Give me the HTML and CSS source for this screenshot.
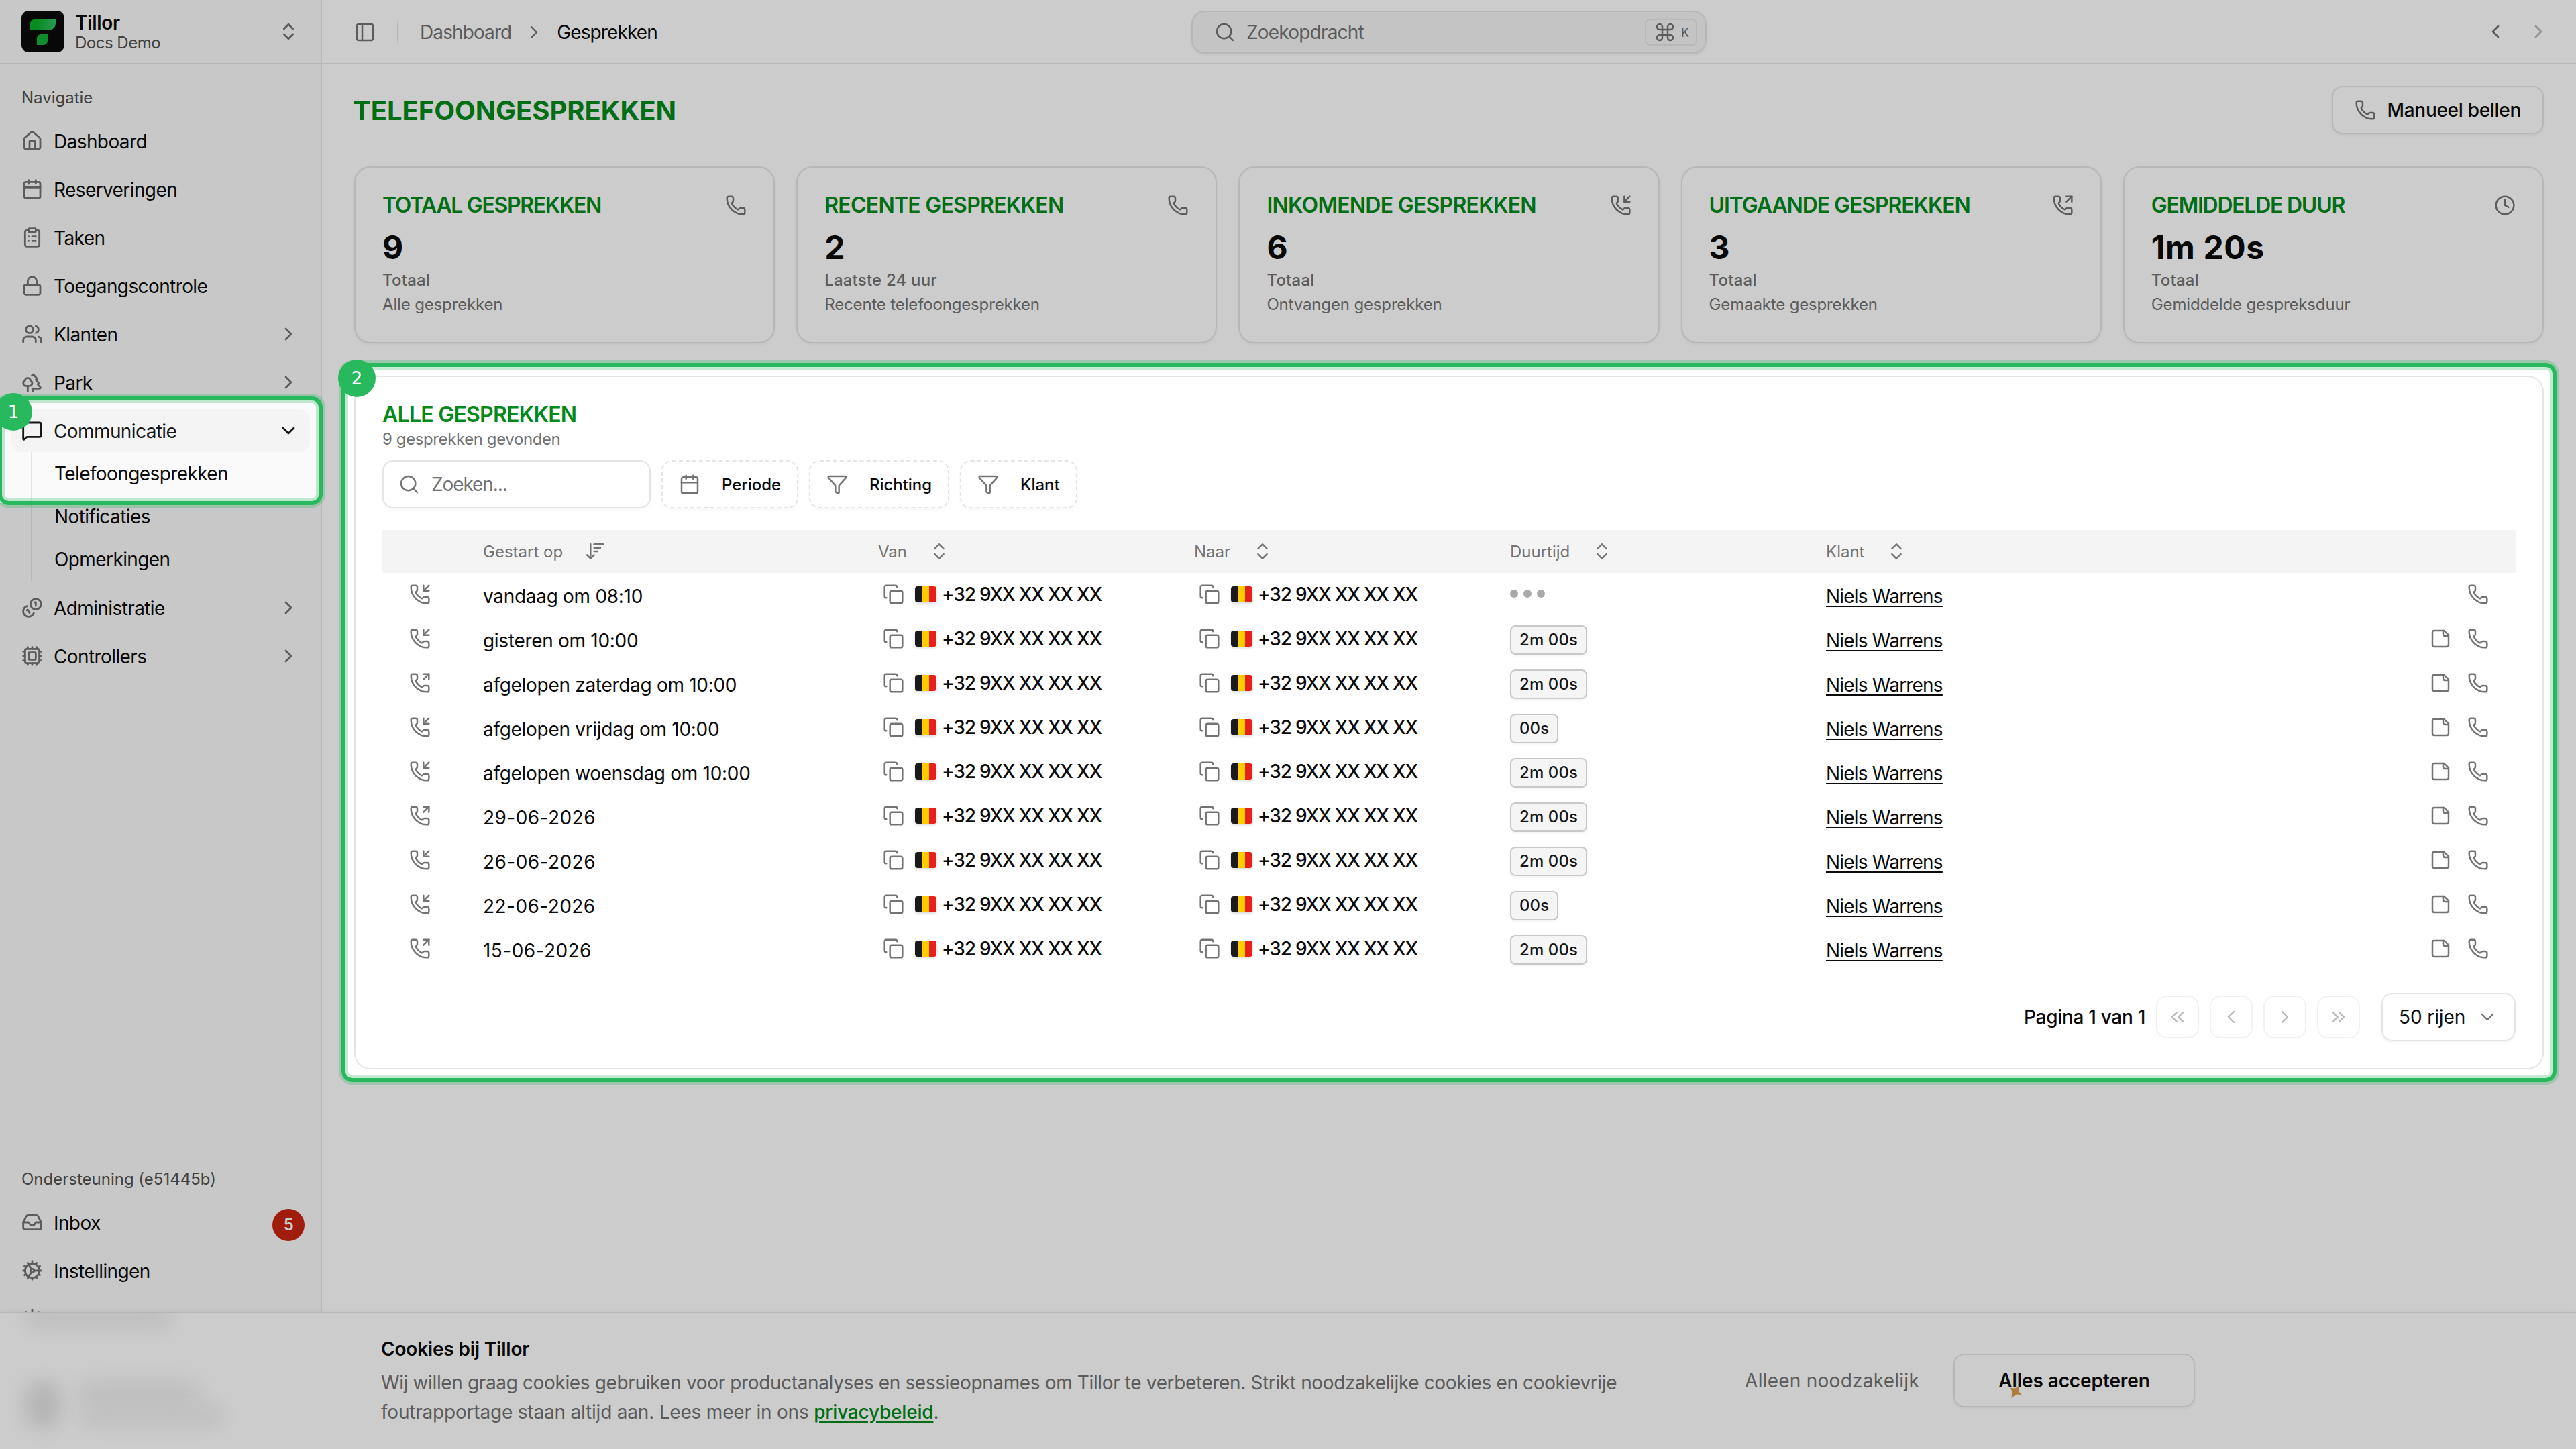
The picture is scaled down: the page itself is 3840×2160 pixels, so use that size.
FILE: index.html
```html
<!DOCTYPE html>
<html lang="nl">
<head>
  <meta charset="UTF-8" />
  <meta name="viewport" content="width=device-width, initial-scale=1.0" />
  <title>Gesprekken - Tillor</title>
  <link rel="stylesheet" href="styles.css">
</head>
<body>
  <!-- icon sprite -->
  <svg class="sprite" width="0" height="0">
    <symbol id="i-updown" viewBox="0 0 24 24"><path d="m7 15 5 5 5-5"/><path d="m7 9 5-5 5 5"/></symbol>
    <symbol id="i-right" viewBox="0 0 24 24"><path d="m9 18 6-6-6-6"/></symbol>
    <symbol id="i-left" viewBox="0 0 24 24"><path d="m15 18-6-6 6-6"/></symbol>
    <symbol id="i-down" viewBox="0 0 24 24"><path d="m6 9 6 6 6-6"/></symbol>
    <symbol id="i-first" viewBox="0 0 24 24"><path d="m11 17-5-5 5-5"/><path d="m18 17-5-5 5-5"/></symbol>
    <symbol id="i-last" viewBox="0 0 24 24"><path d="m6 17 5-5-5-5"/><path d="m13 17 5-5-5-5"/></symbol>
    <symbol id="i-home" viewBox="0 0 24 24"><path d="M15 21v-8a1 1 0 0 0-1-1h-4a1 1 0 0 0-1 1v8"/><path d="M3 10a2 2 0 0 1 .709-1.528l7-6a2 2 0 0 1 2.582 0l7 6A2 2 0 0 1 21 10v9a2 2 0 0 1-2 2H5a2 2 0 0 1-2-2z"/></symbol>
    <symbol id="i-calendar" viewBox="0 0 24 24"><path d="M8 2v4"/><path d="M16 2v4"/><rect width="18" height="18" x="3" y="4" rx="2"/><path d="M3 10h18"/></symbol>
    <symbol id="i-tasks" viewBox="0 0 24 24"><rect width="8" height="4" x="8" y="2" rx="1"/><path d="M16 4h2a2 2 0 0 1 2 2v14a2 2 0 0 1-2 2H6a2 2 0 0 1-2-2V6a2 2 0 0 1 2-2h2"/><path d="M12 11h4"/><path d="M12 16h4"/><path d="M8 11h.01"/><path d="M8 16h.01"/></symbol>
    <symbol id="i-lock" viewBox="0 0 24 24"><rect width="18" height="11" x="3" y="11" rx="2"/><path d="M7 11V7a5 5 0 0 1 10 0v4"/></symbol>
    <symbol id="i-users" viewBox="0 0 24 24"><path d="M16 21v-2a4 4 0 0 0-4-4H6a4 4 0 0 0-4 4v2"/><path d="M16 3.128a4 4 0 0 1 0 7.744"/><path d="M22 21v-2a4 4 0 0 0-3-3.87"/><circle cx="9" cy="7" r="4"/></symbol>
    <symbol id="i-trees" viewBox="0 0 24 24"><path d="M10 10v.2A3 3 0 0 1 8.9 16H5a3 3 0 0 1-1-5.8V10a3 3 0 0 1 6 0Z"/><path d="M7 16v6"/><path d="M13 19v3"/><path d="M12 19h8.3a1 1 0 0 0 .7-1.7L18 14h.3a1 1 0 0 0 .7-1.7L16 9h.2a1 1 0 0 0 .8-1.7L13 3l-1.4 1.5"/></symbol>
    <symbol id="i-message" viewBox="0 0 24 24"><path d="M22 17a2 2 0 0 1-2 2H6.828a2 2 0 0 0-1.414.586l-2.202 2.202A.71.71 0 0 1 2 21.286V5a2 2 0 0 1 2-2h16a2 2 0 0 1 2 2z"/></symbol>
    <symbol id="i-coins" viewBox="0 0 24 24"><path d="M13.744 17.736a6 6 0 1 1-7.48-7.48"/><path d="M15 6h1v4"/><path d="m6.134 14.768.866-.5 2 3.464"/><circle cx="16" cy="8" r="6"/></symbol>
    <symbol id="i-cpu" viewBox="0 0 24 24"><path d="M12 20v2M12 2v2M17 20v2M17 2v2M2 12h2M2 17h2M2 7h2M20 12h2M20 17h2M20 7h2M7 20v2M7 2v2"/><rect x="4" y="4" width="16" height="16" rx="2"/><rect x="8" y="8" width="8" height="8" rx="1"/></symbol>
    <symbol id="i-inbox" viewBox="0 0 24 24"><path d="M22 12h-6l-2 3h-4l-2-3H2"/><path d="M5.45 5.11 2 12v6a2 2 0 0 0 2 2h16a2 2 0 0 0 2-2v-6l-3.45-6.89A2 2 0 0 0 16.76 4H7.24a2 2 0 0 0-1.79 1.11z"/></symbol>
    <symbol id="i-cog" viewBox="0 0 24 24"><path d="M11 10.27 7 3.34M11 13.73l-4 6.93M12 22v-2M12 2v2M14 12h8M17 20.66l-1-1.73M17 3.34l-1 1.73M2 12h2M20.66 17l-1.73-1M20.66 7l-1.73 1M3.34 17l1.73-1M3.34 7l1.73 1"/><circle cx="12" cy="12" r="2"/><circle cx="12" cy="12" r="8"/></symbol>
    <symbol id="i-sun" viewBox="0 0 24 24"><circle cx="12" cy="12" r="4"/><path d="M12 2v2M12 20v2M4.93 4.93l1.41 1.41M17.66 17.66l1.41 1.41M2 12h2M20 12h2M6.34 17.66l-1.41 1.41M19.07 4.93l-1.41 1.41"/></symbol>
    <symbol id="i-panel" viewBox="0 0 24 24"><rect width="18" height="18" x="3" y="3" rx="2"/><path d="M9 3v18"/></symbol>
    <symbol id="i-search" viewBox="0 0 24 24"><path d="m21 21-4.34-4.34"/><circle cx="11" cy="11" r="8"/></symbol>
    <symbol id="i-cmd" viewBox="0 0 24 24"><path d="M15 6v12a3 3 0 1 0 3-3H6a3 3 0 1 0 3 3V6a3 3 0 1 0-3 3h12a3 3 0 1 0-3-3"/></symbol>
    <symbol id="i-phone" viewBox="0 0 24 24"><path d="M13.832 16.568a1 1 0 0 0 1.213-.303l.355-.465A2 2 0 0 1 17 15h3a2 2 0 0 1 2 2v3a2 2 0 0 1-2 2A18 18 0 0 1 2 4a2 2 0 0 1 2-2h3a2 2 0 0 1 2 2v3a2 2 0 0 1-.8 1.6l-.468.351a1 1 0 0 0-.292 1.233 14 14 0 0 0 6.392 6.384"/></symbol>
    <symbol id="i-in" viewBox="0 0 24 24"><path d="M16 2v6h6"/><path d="m22 2-6 6"/><use href="#i-phone"/></symbol>
    <symbol id="i-out" viewBox="0 0 24 24"><path d="m16 8 6-6"/><path d="M22 8V2h-6"/><use href="#i-phone"/></symbol>
    <symbol id="i-clock" viewBox="0 0 24 24"><circle cx="12" cy="12" r="10"/><path d="M12 6v6l4 2"/></symbol>
    <symbol id="i-funnel" viewBox="0 0 24 24"><path d="M10 20a1 1 0 0 0 .553.895l2 1A1 1 0 0 0 14 21v-7a2 2 0 0 1 .517-1.341L21.74 4.67A1 1 0 0 0 21 3H3a1 1 0 0 0-.742 1.67l7.225 7.989A2 2 0 0 1 10 14z"/></symbol>
    <symbol id="i-sort" viewBox="0 0 24 24"><path d="m3 16 4 4 4-4"/><path d="M7 20V4"/><path d="M11 4h10"/><path d="M11 8h7"/><path d="M11 12h4"/></symbol>
    <symbol id="i-copy" viewBox="0 0 24 24"><rect width="14" height="14" x="8" y="8" rx="2"/><path d="M4 16c-1.1 0-2-.9-2-2V4c0-1.1.9-2 2-2h10c1.1 0 2 .9 2 2"/></symbol>
    <symbol id="i-note" viewBox="0 0 24 24"><path d="M16 3H5a2 2 0 0 0-2 2v14a2 2 0 0 0 2 2h14a2 2 0 0 0 2-2V8Z"/><path d="M15 3v4a2 2 0 0 0 2 2h4"/></symbol>
  </svg>

  <div class="app">
    <aside class="sidebar">
      <div class="sidebar-head">
        <svg class="logo" viewBox="0 0 64 62">
          <defs>
            <linearGradient id="lg" x1="0" y1="0" x2="1" y2="0"><stop offset=".25" stop-color="#0cad26"/><stop offset="1" stop-color="#30c267"/></linearGradient>
          </defs>
          <rect width="64" height="62" rx="11" fill="#0a0a0a"/>
          <path d="M19 13h32v6a10 10 0 0 1-10 10H13V19a6 6 0 0 1 6-6z" fill="url(#lg)"/>
          <path d="M29 35h10v10a6 6 0 0 1-6 6H23V41a6 6 0 0 1 6-6z" fill="#15b136"/>
        </svg>
        <div class="team">
          <strong>Tillor</strong>
          <span>Docs Demo</span>
        </div>
        <svg class="icon"><use href="#i-updown"/></svg>
      </div>
      <nav class="nav">
        <div class="nav-label">Navigatie</div>
        <a class="nav-item"><svg class="icon"><use href="#i-home"/></svg><span>Dashboard</span></a>
        <a class="nav-item"><svg class="icon"><use href="#i-calendar"/></svg><span>Reserveringen</span></a>
        <a class="nav-item"><svg class="icon"><use href="#i-tasks"/></svg><span>Taken</span></a>
        <a class="nav-item"><svg class="icon"><use href="#i-lock"/></svg><span>Toegangscontrole</span></a>
        <a class="nav-item"><svg class="icon"><use href="#i-users"/></svg><span>Klanten</span><svg class="icon"><use href="#i-right"/></svg></a>
        <a class="nav-item"><svg class="icon"><use href="#i-trees"/></svg><span>Park</span><svg class="icon"><use href="#i-right"/></svg></a>
        <a class="nav-item active"><svg class="icon"><use href="#i-message"/></svg><span>Communicatie</span><svg class="icon"><use href="#i-down"/></svg></a>
        <div class="nav-sub">
          <a>Telefoongesprekken</a>
          <a>Notificaties</a>
          <a>Opmerkingen</a>
        </div>
        <a class="nav-item"><svg class="icon"><use href="#i-coins"/></svg><span>Administratie</span><svg class="icon"><use href="#i-right"/></svg></a>
        <a class="nav-item"><svg class="icon"><use href="#i-cpu"/></svg><span>Controllers</span><svg class="icon"><use href="#i-right"/></svg></a>
      </nav>
      <nav class="nav nav-support">
        <div class="nav-label">Ondersteuning (e51445b)</div>
        <a class="nav-item"><svg class="icon"><use href="#i-inbox"/></svg><span>Inbox</span><b class="count">5</b></a>
        <a class="nav-item"><svg class="icon"><use href="#i-cog"/></svg><span>Instellingen</span></a>
        <a class="nav-item"><svg class="icon"><use href="#i-sun"/></svg></a>
      </nav>
    </aside>

    <main class="main">
      <header class="topbar">
        <div class="crumbs">
          <svg class="icon"><use href="#i-panel"/></svg>
          <i class="sep"></i>
          <span class="muted">Dashboard</span>
          <svg class="icon"><use href="#i-right"/></svg>
          <span>Gesprekken</span>
        </div>
        <div class="search">
          <svg class="icon"><use href="#i-search"/></svg>
          <span>Zoekopdracht</span>
          <kbd><svg class="icon"><use href="#i-cmd"/></svg>K</kbd>
        </div>
        <div class="history">
          <svg class="icon"><use href="#i-left"/></svg>
          <svg class="icon off"><use href="#i-right"/></svg>
        </div>
      </header>

      <div class="content">
        <div class="page-head">
          <h1>TELEFOONGESPREKKEN</h1>
          <button class="btn"><svg class="icon"><use href="#i-phone"/></svg>Manueel bellen</button>
        </div>

        <section class="stats">
          <div class="stat">
            <h2>TOTAAL GESPREKKEN</h2><svg class="icon"><use href="#i-phone"/></svg>
            <div class="value">9</div>
            <p class="period">Totaal</p>
            <p>Alle gesprekken</p>
          </div>
          <div class="stat">
            <h2>RECENTE GESPREKKEN</h2><svg class="icon"><use href="#i-phone"/></svg>
            <div class="value">2</div>
            <p class="period">Laatste 24 uur</p>
            <p>Recente telefoongesprekken</p>
          </div>
          <div class="stat">
            <h2>INKOMENDE GESPREKKEN</h2><svg class="icon"><use href="#i-in"/></svg>
            <div class="value">6</div>
            <p class="period">Totaal</p>
            <p>Ontvangen gesprekken</p>
          </div>
          <div class="stat">
            <h2>UITGAANDE GESPREKKEN</h2><svg class="icon"><use href="#i-out"/></svg>
            <div class="value">3</div>
            <p class="period">Totaal</p>
            <p>Gemaakte gesprekken</p>
          </div>
          <div class="stat">
            <h2>GEMIDDELDE DUUR</h2><svg class="icon"><use href="#i-clock"/></svg>
            <div class="value">1m 20s</div>
            <p class="period">Totaal</p>
            <p>Gemiddelde gespreksduur</p>
          </div>
        </section>

        <section class="panel">
          <h2>ALLE GESPREKKEN</h2>
          <p class="found">9 gesprekken gevonden</p>
          <div class="filters">
            <div class="input"><svg class="icon"><use href="#i-search"/></svg>Zoeken...</div>
            <button class="filter"><svg class="icon"><use href="#i-calendar"/></svg>Periode</button>
            <button class="filter"><svg class="icon"><use href="#i-funnel"/></svg>Richting</button>
            <button class="filter"><svg class="icon"><use href="#i-funnel"/></svg>Klant</button>
          </div>
          <div class="table">
            <div class="row head">
              <div></div>
              <div>Gestart op<svg class="icon"><use href="#i-sort"/></svg></div>
              <div>Van<svg class="icon"><use href="#i-updown"/></svg></div>
              <div>Naar<svg class="icon"><use href="#i-updown"/></svg></div>
              <div>Duurtijd<svg class="icon"><use href="#i-updown"/></svg></div>
              <div>Klant<svg class="icon"><use href="#i-updown"/></svg></div>
            </div>
            <div id="calls"></div>
          </div>
          <div class="pager">
            <span>Pagina 1 van 1</span>
            <button><svg class="icon"><use href="#i-first"/></svg></button>
            <button><svg class="icon"><use href="#i-left"/></svg></button>
            <button><svg class="icon"><use href="#i-right"/></svg></button>
            <button><svg class="icon"><use href="#i-last"/></svg></button>
            <div class="select">50 rijen<svg class="icon"><use href="#i-down"/></svg></div>
          </div>
        </section>
      </div>
    </main>
  </div>

  <div class="cookies">
    <i class="ghost ghost-theme"></i>
    <i class="ghost ghost-avatar"></i>
    <i class="ghost ghost-user"></i>
    <i class="ghost ghost-mail"></i>
    <div class="cookies-inner">
      <div class="cookies-text">
        <h3>Cookies bij Tillor</h3>
        <p>Wij willen graag cookies gebruiken voor productanalyses en sessieopnames om Tillor te verbeteren. Strikt noodzakelijke cookies en cookievrije<br><span class="line-2">foutrapportage staan altijd aan. Lees meer in ons <a>privacybeleid</a>.</span></p>
      </div>
      <button class="link-btn">Alleen noodzakelijk</button>
      <button class="accept">Alles accepteren</button>
    </div>
  </div>

  <!-- tour overlay -->
  <div class="dim"></div>
  <svg class="spark" viewBox="0 0 20 20"><path d="M1 3 8 3.500 13 0 13 8 18 13 10 12.500 2 18 4 10z" fill="#b07a3a"/></svg>
  <div class="ring ring-1"></div>
  <div class="ring ring-2"></div>
  <div class="step step-1">1</div>
  <div class="step step-2">2</div>

  <script src="script.js"></script>
</body>
</html>
```
FILE: styles.css
```css
* { box-sizing: border-box; }
body { margin: 0; width: 3840px; height: 2160px; overflow: hidden; position: relative; font-family: Inter, sans-serif; font-size: 28px; letter-spacing: -0.6px; color: #0a0a0a; background: #fff; white-space: nowrap; }
h1, h2, h3, p { margin: 0; }
button { font: inherit; letter-spacing: inherit; color: inherit; background: none; border: 0; padding: 0; }
.sprite { position: absolute; }
.icon { width: 32px; height: 32px; flex: none; fill: none; stroke: #737373; stroke-width: 1.85; stroke-linecap: round; stroke-linejoin: round; }
.muted { color: #737373; }

.app { display: flex; height: 2160px; }

/* sidebar */
.sidebar { width: 480px; flex: none; display: flex; flex-direction: column; background: #fafafa; border-right: 2px solid #e5e5e5; }
.sidebar .icon { stroke-width: 2.1; }
.sidebar-head { height: 96px; display: flex; align-items: center; gap: 16px; padding: 0 32px; border-bottom: 2px solid #e5e5e5; }
.sidebar-head > .icon { margin-left: auto; }
.logo { width: 64px; height: 62px; }
.team { display: flex; flex-direction: column; }
.team strong { font-weight: 600; line-height: 30px; letter-spacing: -0.3px; padding-top: 3px; }
.team span { font-size: 24px; line-height: 30px; letter-spacing: -0.5px; color: #525252; }
.nav { display: flex; flex-direction: column; gap: 8px; padding: 18px 16px 0; }
.nav-label { height: 64px; line-height: 64px; margin-bottom: -8px; padding-left: 16px; font-size: 24px; letter-spacing: 0; color: #525252; }
.nav-item { display: flex; align-items: center; gap: 16px; height: 64px; padding: 0 16px; border-radius: 16px; }
.nav-item span { flex: 1; padding-top: 1px; }
.nav-item.active { background: #f4f4f5; color: #171717; }
.nav-item.active .icon { stroke: #171717; }
.nav-sub { display: flex; flex-direction: column; gap: 8px; margin: -8px 0 0 30px; padding: 4px 0 4px 33px; border-left: 2px solid #e5e5e5; }
.nav-sub a { height: 56px; line-height: 57px; }
.nav-support { margin-top: auto; padding-top: 0; padding-bottom: 162px; }
.count { width: 48px; height: 48px; margin: 8px -8px 0 0; border-radius: 50%; background: #c82410; color: #fff; font-size: 24px; font-weight: 600; line-height: 48px; text-align: center; }

/* top bar */
.main { flex: 1; display: flex; flex-direction: column; }
.topbar { height: 96px; display: grid; grid-template-columns: 1fr 768px 1fr; align-items: center; border-bottom: 2px solid #e5e5e5; }
.crumbs { display: flex; align-items: center; padding-left: 48px; letter-spacing: -0.9px; padding-top: 2px; }
.sep { width: 2px; height: 32px; margin: 0 32px; background: #e5e5e5; }
.crumbs span + .icon { margin: 0 18px; }
.search { display: flex; align-items: center; gap: 16px; height: 64px; margin-top: 2px; padding: 0 12px 0 32px; border: 2px solid #e5e5e5; border-radius: 20px; background: #f5f5f5; color: #737373; letter-spacing: -0.8px; box-shadow: 0 2px 4px rgba(0,0,0,0.05); }
.search kbd { display: flex; align-items: center; gap: 8px; width: 78px; height: 40px; margin-left: auto; padding: 0 12px; border: 2px solid #e5e5e5; border-radius: 8px; font: 400 18px Inter, sans-serif; }
.history { display: flex; justify-content: flex-end; gap: 32px; padding-right: 40px; }
.history .icon { stroke-width: 2; }
.history .off { opacity: 0.5; }

/* page */
.content { display: flex; flex-direction: column; gap: 48px; padding: 32px 48px 0; }
.page-head { display: flex; justify-content: space-between; align-items: center; height: 72px; }
h1 { font-size: 40px; font-weight: 700; letter-spacing: -0.05px; color: #008a1a; margin-left: -2px; }
.btn { display: flex; align-items: center; gap: 16px; height: 72px; padding: 0 32px; border: 2px solid #e5e5e5; border-radius: 16px; font-weight: 500; letter-spacing: -0.3px; box-shadow: 0 2px 4px rgba(0,0,0,0.05); }
.stats { display: grid; grid-template-columns: repeat(5, 1fr); gap: 32px; }
.stat { display: grid; grid-template-columns: 1fr 32px; align-content: start; align-items: center; height: 264px; padding: 36px 40px 0; border: 2px solid #e5e5e5; border-radius: 24px; box-shadow: 0 2px 4px rgba(0,0,0,0.05); }
.stat h2, .panel h2 { font-size: 32px; font-weight: 600; line-height: 40px; letter-spacing: -0.75px; color: #008a1a; }
.stat:first-child h2 { letter-spacing: -1.35px; }
.stat:nth-child(4) h2 { letter-spacing: -1.1px; }
.stat:last-child h2 { letter-spacing: -1.25px; }
.value { grid-column: 1 / 3; margin-top: 12px; font-size: 48px; font-weight: 700; line-height: 62px; letter-spacing: 0.6px; }
.stat p { grid-column: 1 / 3; font-size: 24px; line-height: 36px; letter-spacing: -0.15px; color: #737373; }
.stat .period { font-weight: 500; letter-spacing: 0.2px; }

/* calls panel */
.panel { height: 1034px; padding: 36px 40px 40px; border: 2px solid #e5e5e5; border-radius: 24px; }
.found { font-size: 24px; line-height: 34px; letter-spacing: -0.4px; color: #737373; }
.filters { display: flex; gap: 16px; margin: 14px 0 32px; }
.input, .filter { display: flex; align-items: center; height: 72px; border: 2px solid #e5e5e5; border-radius: 16px; box-shadow: 0 2px 4px rgba(0,0,0,0.04); }
.input { width: 400px; gap: 17px; padding-left: 22px; color: #737373; letter-spacing: -1.1px; }
.filter { gap: 32px; padding: 0 24px; border-style: dashed; font-size: 24px; font-weight: 500; letter-spacing: -0.05px; }
.row { display: grid; grid-template-columns: 150px 589px 471px 471px 471px 1fr 160px; height: 66px; }
.row > div { display: flex; align-items: center; }
.row.head { height: 64px; background: #f4f4f4; border-radius: 2px; font-size: 24px; letter-spacing: 0; color: #737373; }
.head .icon { margin-left: 32px; }
.row .type { padding: 0 0 2px 40px; }
.row .when { letter-spacing: -0.3px; padding-top: 3px; }
.row .date { letter-spacing: 0.45px; }
.row .number { padding: 0 0 2px 7px; font-weight: 500; letter-spacing: -1.17px; }
.flag { width: 32px; height: 24px; margin: 0 8px 0 16px; border-radius: 4px; background: linear-gradient(90deg, #1a1a1a 33.3%, #ffcd00 33.3% 66.6%, #e8201c 66.6%); box-shadow: 0 2px 4px rgba(0,0,0,0.15); }
.badge { height: 44px; margin-top: 1px; padding: 0 12px; border: 2px solid #c8c8c8; border-radius: 8px; background: #f5f5f5; color: #171717; font-size: 24px; font-weight: 500; line-height: 40px; letter-spacing: 0.1px; box-shadow: 0 2px 4px rgba(0,0,0,0.05); }
.dots { display: flex; gap: 8px; padding: 0 0 4px 0; }
.dots i { width: 12px; height: 12px; border-radius: 50%; background: #a9a9a9; }
.row .client { letter-spacing: -0.8px; padding-top: 3px; text-decoration: underline; text-decoration-thickness: 2px; text-underline-offset: 4px; }
.row .actions { justify-content: flex-end; gap: 24px; padding: 0 40px 2px 0; }
.pager { display: flex; align-items: center; justify-content: flex-end; gap: 16px; height: 72px; margin-top: 32px; font-weight: 500; letter-spacing: -0.3px; }
.pager button { display: flex; align-items: center; justify-content: center; width: 64px; height: 64px; border: 2px solid #e5e5e5; border-radius: 16px; opacity: 0.5; }
.select { display: flex; align-items: center; justify-content: space-between; width: 200px; height: 72px; margin-left: 16px; padding: 0 24px; border: 2px solid #e5e5e5; border-radius: 16px; font-weight: 400; letter-spacing: -0.1px; box-shadow: 0 2px 4px rgba(0,0,0,0.05); }

/* cookie bar */
.cookies { position: absolute; left: 0; right: 0; bottom: 0; height: 204px; overflow: hidden; display: flex; justify-content: center; background: #fff; border-top: 2px solid #e5e5e5; box-shadow: 0 -2px 6px rgba(0,0,0,0.04); }
.cookies-inner { display: flex; align-items: center; width: 2704px; padding-bottom: 2px; }
.cookies-text { flex: 1; }
.cookies h3 { font-size: 28px; font-weight: 600; line-height: 44px; letter-spacing: -0.2px; margin-bottom: 6px; }
.cookies p { line-height: 44px; letter-spacing: -0.37px; color: #737373; }
.cookies .line-2 { letter-spacing: -0.2px; }
.cookies p a { font-weight: 500; color: #008a1a; text-decoration: underline; text-underline-offset: 4px; }
.link-btn { margin-right: 51px; letter-spacing: 0.25px; color: #737373; }
.accept { width: 360px; height: 80px; border: 2px solid #e5e5e5; border-radius: 16px; font-weight: 600; letter-spacing: -0.1px; box-shadow: 0 2px 4px rgba(0,0,0,0.05); }
.ghost { position: absolute; border-radius: 20px; background: #f0f0f0; filter: blur(14px); }
.ghost-theme { left: 36px; top: -20px; width: 220px; height: 44px; }
.ghost-avatar { left: 38px; top: 102px; width: 52px; height: 68px; background: #e2e2e2; }
.ghost-user { left: 118px; top: 98px; width: 180px; height: 44px; }
.ghost-mail { left: 118px; top: 134px; width: 216px; height: 36px; }

/* tour overlay */
.dim { position: absolute; inset: 0; background: rgba(0,0,0,0.2); clip-path: path(evenodd, "M0 0H3840V2160H0Z M0 594H466A12 12 0 0 1 478 606V738A12 12 0 0 1 466 750H0Z M524 544H3796A12 12 0 0 1 3808 556V1598A12 12 0 0 1 3796 1610H524A12 12 0 0 1 512 1598V556A12 12 0 0 1 524 544Z"); }
.ring { position: absolute; border: 6px solid #28b85e; border-radius: 16px; box-shadow: 0 0 0 4px rgba(40,184,94,0.28), inset 0 0 0 4px rgba(40,184,94,0.28); }
.ring-1 { left: -3px; top: 591px; width: 484px; height: 162px; }
.ring-2 { left: 509px; top: 541px; width: 3302px; height: 1072px; }
.step { position: absolute; width: 56px; height: 56px; border-radius: 50%; background: #28b85e; color: #fff; font: 26px/56px "DejaVu Sans", sans-serif; letter-spacing: 0; text-align: center; }
.step-1 { left: -8px; top: 586px; }
.step-2 { left: 504px; top: 536px; }
.spark { position: absolute; left: 2996px; top: 2066px; width: 20px; height: 20px; }
```
FILE: script.js
```js
// [direction, started, duration]
const calls = [
  ['in', 'vandaag om 08:10', null],
  ['in', 'gisteren om 10:00', '2m 00s'],
  ['out', 'afgelopen zaterdag om 10:00', '2m 00s'],
  ['in', 'afgelopen vrijdag om 10:00', '00s'],
  ['in', 'afgelopen woensdag om 10:00', '2m 00s'],
  ['out', '29-06-2026', '2m 00s'],
  ['in', '26-06-2026', '2m 00s'],
  ['in', '22-06-2026', '00s'],
  ['out', '15-06-2026', '2m 00s']
];

const icon = name => `<svg class="icon"><use href="#i-${name}"/></svg>`;
const number = `<div class="number">${icon('copy')}<i class="flag"></i>+32 9XX XX XX XX</div>`;

document.getElementById('calls').innerHTML = calls.map(([dir, when, duration]) => `
  <div class="row">
    <div class="type">${icon(dir)}</div>
    <div class="when${/^\d/.test(when) ? ' date' : ''}">${when}</div>
    ${number}
    ${number}
    <div>${duration ? `<span class="badge">${duration}</span>` : '<span class="dots"><i></i><i></i><i></i></span>'}</div>
    <div class="client">Niels Warrens</div>
    <div class="actions">${duration ? icon('note') : ''}${icon('phone')}</div>
  </div>`).join('');
```
